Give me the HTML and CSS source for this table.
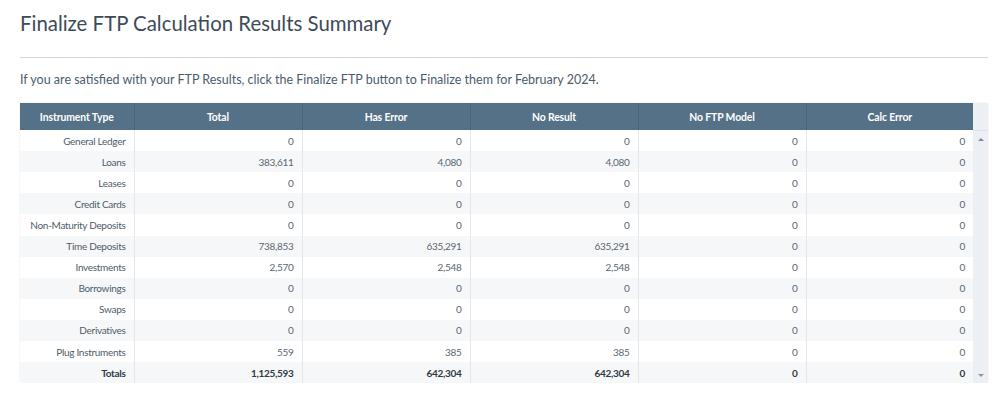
FILE: index.html
```html
<!DOCTYPE html>
<html>
<head>
<meta charset="utf-8">
<link rel="stylesheet" href="styles.css">
</head>
<body>
<div class="page">
  <h1 class="title">Finalize FTP Calculation Results Summary</h1>
  <hr class="rule">
  <p class="intro">If you are satisfied with your FTP Results, click the Finalize FTP button to Finalize them for February 2024.</p>
  <div class="grid-wrap">
    <table class="grid">
      <colgroup>
        <col class="c-type"><col class="c-num"><col class="c-num"><col class="c-num"><col class="c-num"><col class="c-last">
      </colgroup>
      <thead>
        <tr><th>Instrument Type</th><th>Total</th><th>Has Error</th><th>No Result</th><th>No FTP Model</th><th>Calc Error</th></tr>
      </thead>
      <tbody>
        <tr><td>General Ledger</td><td>0</td><td>0</td><td>0</td><td>0</td><td>0</td></tr>
        <tr><td>Loans</td><td>383,611</td><td>4,080</td><td>4,080</td><td>0</td><td>0</td></tr>
        <tr><td>Leases</td><td>0</td><td>0</td><td>0</td><td>0</td><td>0</td></tr>
        <tr><td>Credit Cards</td><td>0</td><td>0</td><td>0</td><td>0</td><td>0</td></tr>
        <tr><td>Non-Maturity Deposits</td><td>0</td><td>0</td><td>0</td><td>0</td><td>0</td></tr>
        <tr><td>Time Deposits</td><td>738,853</td><td>635,291</td><td>635,291</td><td>0</td><td>0</td></tr>
        <tr><td>Investments</td><td>2,570</td><td>2,548</td><td>2,548</td><td>0</td><td>0</td></tr>
        <tr><td>Borrowings</td><td>0</td><td>0</td><td>0</td><td>0</td><td>0</td></tr>
        <tr><td>Swaps</td><td>0</td><td>0</td><td>0</td><td>0</td><td>0</td></tr>
        <tr><td>Derivatives</td><td>0</td><td>0</td><td>0</td><td>0</td><td>0</td></tr>
        <tr><td>Plug Instruments</td><td>559</td><td>385</td><td>385</td><td>0</td><td>0</td></tr>
        <tr class="totals"><td>Totals</td><td>1,125,593</td><td>642,304</td><td>642,304</td><td>0</td><td>0</td></tr>
      </tbody>
    </table>
    <div class="scrollbar">
      <div class="scroll-head"></div>
      <div class="scroll-track">
        <span class="arrow up"></span>
        <span class="arrow down"></span>
      </div>
    </div>
  </div>
</div>
</body>
</html>
```
FILE: styles.css
```css
html, body {
  margin: 0;
  padding: 0;
  background: #ffffff;
}
body {
  font-family: "Lato", "Liberation Sans", sans-serif;
  color: #4a5866;
}
.page {
  padding: 0 20px;
}
.title {
  margin: 0;
  padding-top: 9px;
  font-size: 20.4px;
  font-weight: 400;
  line-height: 28px;
  color: #3d4b58;
}
.rule {
  margin: 20px 0 0 0;
  border: 0;
  border-top: 1px solid #d3d6da;
  height: 0;
}
.intro {
  margin: 13px 0 0 0;
  font-size: 12.5px;
  line-height: 18px;
  color: #4c5c6b;
}
.grid-wrap {
  margin-top: 14px;
  display: flex;
  width: 968px;
  border-radius: 3px;
  box-shadow: 0 0 2px rgba(0,0,0,0.12);
}
.grid {
  border-collapse: collapse;
  table-layout: fixed;
  width: 953px;
  font-size: 10px;
  letter-spacing: -0.3px;
}
.c-type { width: 114px; }
.c-num { width: 168px; }
.c-last { width: 167px; }
.grid th {
  height: 27px;
  padding: 0 6px;
  background: #557187;
  color: #ffffff;
  font-weight: 700;
  font-size: 10.4px;
  letter-spacing: -0.1px;
  text-align: center;
  border-left: 1px solid #4c677c;
}
.grid th:first-child { border-left: 0; }
.grid td {
  height: 21px;
  padding: 0 8px;
  text-align: right;
  color: #5b6670;
  border-left: 1px solid #e4e7eb;
  white-space: nowrap;
}
.grid tbody tr:nth-child(odd) td { height: 21.2px; }
.grid td:first-child { border-left: 0; color: #4f5c68; }
.grid tbody tr:nth-child(even) td { background: #f6f7f9; }
.grid tr.totals td {
  font-weight: 700;
  color: #2e3a45;
}
.scrollbar {
  width: 15px;
  display: flex;
  flex-direction: column;
  background: #eceff3;
}
.scroll-head {
  height: 27px;
  border-bottom: 1px solid #dde1e6;
}
.scroll-track {
  flex: 1;
  display: flex;
  flex-direction: column;
  justify-content: space-between;
  align-items: center;
  padding: 7px 0 6px;
}
.arrow {
  width: 0;
  height: 0;
  border-left: 3px solid transparent;
  border-right: 3px solid transparent;
}
.arrow.up { border-bottom: 3px solid #7f8a96; }
.arrow.down { border-top: 3px solid #8d97a2; }
```
